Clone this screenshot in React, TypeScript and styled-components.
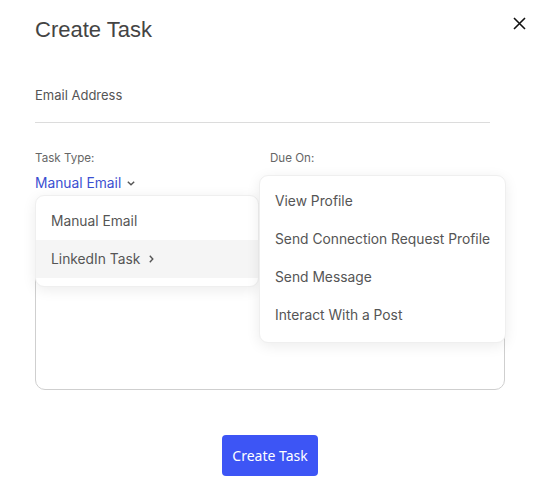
import React from "react";
import styled, { createGlobalStyle } from "styled-components";

const GlobalStyle = createGlobalStyle`
  body {
    margin: 0;
    background: #ffffff;
    font-family: Inter, "Noto Sans", sans-serif;
  }
`;

const Modal = styled.div`
  position: relative;
  width: 540px;
  height: 486px;
  box-sizing: border-box;
  padding: 16px 35px 0 35px;
  background: #fff;
`;

const Title = styled.h2`
  margin: 0;
  font-family: "Liberation Sans", Arial, sans-serif;
  font-size: 22px;
  line-height: 28px;
  font-weight: 400;
  color: #444;
`;

const CloseButton = styled.button`
  position: absolute;
  top: 14px;
  right: 12px;
  width: 18px;
  height: 18px;
  padding: 0;
  border: none;
  background: none;
  display: flex;
  align-items: center;
  justify-content: center;
  cursor: pointer;
`;

const EmailField = styled.div`
  margin-top: 41px;
  width: 455px;
  height: 38px;
  box-sizing: border-box;
  border-bottom: 1px solid #dcdcdc;
  font-size: 13px;
  line-height: 20px;
  color: #555;
`;

const FieldRow = styled.div`
  display: grid;
  grid-template-columns: 235px 1fr;
  margin-top: 27px;
`;

const Field = styled.div`
  position: relative;
`;

const Label = styled.div`
  font-size: 11.6px;
  line-height: 16px;
  color: #666;
`;

const Select = styled.div`
  margin-top: 7px;
  display: inline-flex;
  align-items: center;
  gap: 5px;
  font-size: 13.8px;
  line-height: 20px;
  color: #3b4fd1;
`;

const Menu = styled.div<{ $left: number; $top: number; $width: number }>`
  position: absolute;
  left: ${(p) => p.$left}px;
  top: ${(p) => p.$top}px;
  width: ${(p) => p.$width}px;
  box-sizing: border-box;
  padding: 6px 0 8px;
  background: #fff;
  border: 1px solid #efefef;
  border-radius: 9px;
  box-shadow: 0 3px 14px rgba(0, 0, 0, 0.08);
  z-index: 2;
`;

const MenuItem = styled.div<{ $active?: boolean }>`
  display: flex;
  align-items: center;
  gap: 6px;
  height: 38px;
  padding: 0 15px;
  font-size: 13.8px;
  color: #555;
  white-space: nowrap;
  background: ${(p) => (p.$active ? "#f5f5f5" : "transparent")};
`;

const TextArea = styled.div`
  margin-top: 10px;
  width: 470px;
  height: 187px;
  box-sizing: border-box;
  border: 1px solid #cfcfcf;
  border-radius: 10px;
`;

const Footer = styled.div`
  display: flex;
  justify-content: center;
  margin-top: 45px;
`;

const PrimaryButton = styled.button`
  width: 96px;
  height: 41px;
  border: none;
  border-radius: 4px;
  background: #3d55f5;
  color: #fff;
  font-family: "Noto Sans", sans-serif;
  font-size: 14px;
  cursor: pointer;
`;

const Chevron = ({ dir }: { dir: "down" | "right" }) => (
  <svg width="10" height="10" viewBox="0 0 10 10" fill="none" stroke="#555" strokeWidth="1.4">
    {dir === "down" ? <path d="M1.8 3.8 L5 6.8 L8.2 3.8" /> : <path d="M3.8 1.8 L6.8 5 L3.8 8.2" />}
  </svg>
);

export default function App() {
  return (
    <>
      <GlobalStyle />
      <Modal>
        <Title>Create Task</Title>
        <CloseButton aria-label="Close">
          <svg width="13" height="13" viewBox="0 0 13 13" stroke="#111" strokeWidth="1.6">
            <path d="M1 1 L12 12 M12 1 L1 12" />
          </svg>
        </CloseButton>
        <EmailField>Email Address</EmailField>
        <FieldRow>
          <Field>
            <Label>Task Type:</Label>
            <Select>
              Manual Email <Chevron dir="down" />
            </Select>
            <Menu $left={0} $top={45} $width={224}>
              <MenuItem>Manual Email</MenuItem>
              <MenuItem $active>
                LinkedIn Task <Chevron dir="right" />
              </MenuItem>
            </Menu>
          </Field>
          <Field>
            <Label>Due On:</Label>
            <Menu $left={-11} $top={25} $width={247}>
              <MenuItem>View Profile</MenuItem>
              <MenuItem>Send Connection Request Profile</MenuItem>
              <MenuItem>Send Message</MenuItem>
              <MenuItem>Interact With a Post</MenuItem>
            </Menu>
          </Field>
        </FieldRow>
        <TextArea />
        <Footer>
          <PrimaryButton>Create Task</PrimaryButton>
        </Footer>
      </Modal>
    </>
  );
}
